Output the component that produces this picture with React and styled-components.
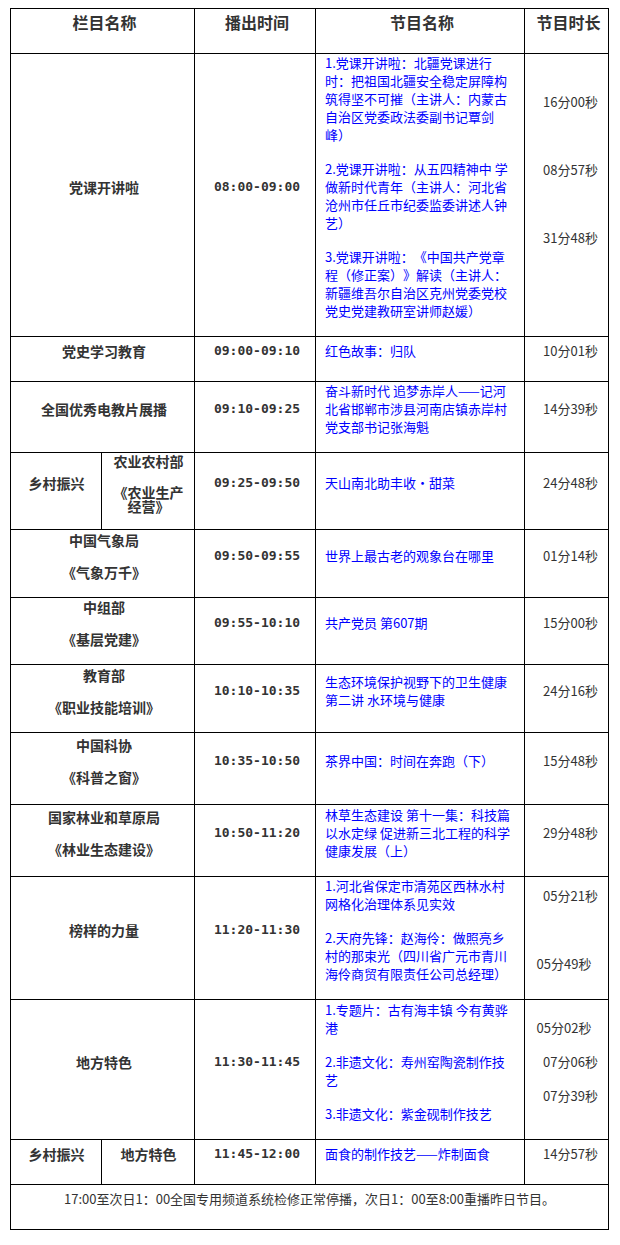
import React from "react";
import styled, { createGlobalStyle } from "styled-components";

const GlobalStyle = createGlobalStyle`
  html, body { margin: 0; padding: 0; background: #ffffff; }
  body { font-family: "Noto Sans CJK SC", "Noto Sans", sans-serif; }
`;

const Page = styled.div`
  padding: 8px 0 16px 10px;
`;

const Table = styled.table`
  border-collapse: collapse;
  table-layout: fixed;
  width: 598px;
  font-family: "Noto Sans CJK SC", "Noto Sans", sans-serif;
  text-spacing-trim: space-all;
  color: #333333;
`;

const Col = styled.col`
  width: ${(p) => p.$w}px;
`;

const Row = styled.tr`
  height: ${(p) => p.$h}px;
`;

const baseCell = `
  border: 1px solid #000000;
  vertical-align: middle;
  box-sizing: border-box;
`;

const HeadCell = styled.th`
  ${baseCell}
  padding: 0 0 0 4px;
  text-align: center;
  font-weight: 700;
`;

const HeadText = styled.p`
  margin: 0 0 18px;
  font-size: 16px;
  line-height: 18px;
`;

const NameCell = styled.td`
  ${baseCell}
  padding: 0 ${(p) => (p.$sub ? "5px" : "2px")} 0 ${(p) => (p.$sub ? "6px" : "5px")};
  text-align: center;
  font-weight: 700;
  font-size: 14px;
`;

const NamePara = styled.p`
  margin: 0 0 16px;
  line-height: ${(p) => (p.$tight ? 14 : 16)}px;
`;

const TimeCell = styled.td`
  ${baseCell}
  padding: 0 0 0 4px;
  text-align: center;
  font-family: "DejaVu Sans Mono", "Liberation Mono", monospace;
  font-weight: 700;
  font-size: 13px;
`;

const ProgCell = styled.td`
  ${baseCell}
  padding: 0 10px 0 9px;
  text-align: left;
  color: #0000ff;
  font-size: 13px;
`;

const DurCell = styled.td`
  ${baseCell}
  padding: 0 0 0 8px;
  text-align: center;
  font-size: 13px;
  color: #333333;
`;

const Line = styled.p`
  margin: 0 0 16px;
  line-height: 18px;
  padding-right: ${(p) => (p.$shift ? 13 : 0)}px;
`;

const NoteCell = styled.td`
  ${baseCell}
  padding: 0;
  text-align: center;
  font-size: 13px;
  color: #333333;
`;

const rows = [
  {
    h: 283,
    name: ["党课开讲啦"],
    time: "08:00-09:00",
    progs: [
      "1.党课开讲啦：北疆党课进行时：把祖国北疆安全稳定屏障构筑得坚不可摧（主讲人：内蒙古自治区党委政法委副书记覃剑峰）",
      "2.党课开讲啦：从五四精神中 学做新时代青年（主讲人：河北省沧州市任丘市纪委监委讲述人钟艺）",
      "3.党课开讲啦：《中国共产党章程（修正案）》解读（主讲人：新疆维吾尔自治区克州党委党校党史党建教研室讲师赵媛）",
    ],
    durs: ["16分00秒", "", "08分57秒", "", "31分48秒", ""],
  },
  { h: 45, name: ["党史学习教育"], time: "09:00-09:10", progs: ["红色故事：归队"], durs: ["10分01秒"] },
  {
    h: 71,
    name: ["全国优秀电教片展播"],
    time: "09:10-09:25",
    progs: ["奋斗新时代 追梦赤岸人——记河北省邯郸市涉县河南店镇赤岸村党支部书记张海魁"],
    durs: ["14分39秒"],
  },
  {
    h: 77,
    split: { left: ["乡村振兴"], right: ["农业农村部", "《农业生产经营》"] },
    time: "09:25-09:50",
    progs: ["天山南北助丰收·甜菜"],
    durs: ["24分48秒"],
  },
  { h: 68, name: ["中国气象局", "《气象万千》"], time: "09:50-09:55", progs: ["世界上最古老的观象台在哪里"], durs: ["01分14秒"] },
  { h: 67, name: ["中组部", "《基层党建》"], time: "09:55-10:10", progs: ["共产党员 第607期"], durs: ["15分00秒"] },
  {
    h: 68,
    name: ["教育部", "《职业技能培训》"],
    time: "10:10-10:35",
    progs: ["生态环境保护视野下的卫生健康第二讲 水环境与健康"],
    durs: ["24分16秒"],
  },
  { h: 72, name: ["中国科协", "《科普之窗》"], time: "10:35-10:50", progs: ["茶界中国：时间在奔跑（下）"], durs: ["15分48秒"] },
  {
    h: 72,
    name: ["国家林业和草原局", "《林业生态建设》"],
    time: "10:50-11:20",
    progs: ["林草生态建设 第十一集：科技篇以水定绿 促进新三北工程的科学健康发展（上）"],
    durs: ["29分48秒"],
  },
  {
    h: 122,
    name: ["榜样的力量"],
    time: "11:20-11:30",
    progs: [
      "1.河北省保定市清苑区西林水村网格化治理体系见实效",
      "2.天府先锋：赵海伶：做照亮乡村的那束光（四川省广元市青川海伶商贸有限责任公司总经理）",
    ],
    durs: ["05分21秒", "", { t: "05分49秒", shift: true }],
  },
  {
    h: 140,
    name: ["地方特色"],
    time: "11:30-11:45",
    progs: ["1.专题片：古有海丰镇 今有黄骅港", "2.非遗文化：寿州窑陶瓷制作技艺", "3.非遗文化：紫金砚制作技艺"],
    durs: [{ t: "05分02秒", shift: true }, "07分06秒", "07分39秒"],
  },
  {
    h: 45,
    split: { left: ["乡村振兴"], right: ["地方特色"] },
    time: "11:45-12:00",
    progs: ["面食的制作技艺——炸制面食"],
    durs: ["14分57秒"],
  },
];

function Names({ items }) {
  return items.map((n, i) => (
    <NamePara key={i} $tight={n.length > 6}>
      {n}
    </NamePara>
  ));
}

function Durations({ items }) {
  return items.map((d, i) => {
    const item = typeof d === "string" ? { t: d } : d;
    return (
      <Line key={i} $shift={item.shift}>
        {item.t || "\u00a0"}
      </Line>
    );
  });
}

export default function App() {
  return (
    <Page>
      <GlobalStyle />
      <Table>
        <colgroup>
          <Col $w={91} />
          <Col $w={93} />
          <Col $w={121} />
          <Col $w={209} />
          <Col $w={84} />
        </colgroup>
        <thead>
          <Row $h={45}>
            <HeadCell colSpan={2}>
              <HeadText>栏目名称</HeadText>
            </HeadCell>
            <HeadCell>
              <HeadText>播出时间</HeadText>
            </HeadCell>
            <HeadCell>
              <HeadText>节目名称</HeadText>
            </HeadCell>
            <HeadCell>
              <HeadText>节目时长</HeadText>
            </HeadCell>
          </Row>
        </thead>
        <tbody>
          {rows.map((r, i) => (
            <Row key={i} $h={r.h}>
              {r.split ? (
                <>
                  <NameCell $sub>
                    <Names items={r.split.left} />
                  </NameCell>
                  <NameCell $sub>
                    <Names items={r.split.right} />
                  </NameCell>
                </>
              ) : (
                <NameCell colSpan={2}>
                  {r.name.map((n, j) => (
                    <NamePara key={j}>{n}</NamePara>
                  ))}
                </NameCell>
              )}
              <TimeCell>
                <Line>{r.time}</Line>
              </TimeCell>
              <ProgCell>
                {r.progs.map((p, j) => (
                  <Line key={j}>{p}</Line>
                ))}
              </ProgCell>
              <DurCell>
                <Durations items={r.durs} />
              </DurCell>
            </Row>
          ))}
          <Row $h={45}>
            <NoteCell colSpan={5}>
              <Line>17:00至次日1：00全国专用频道系统检修正常停播，次日1：00至8:00重播昨日节目。</Line>
            </NoteCell>
          </Row>
        </tbody>
      </Table>
    </Page>
  );
}
